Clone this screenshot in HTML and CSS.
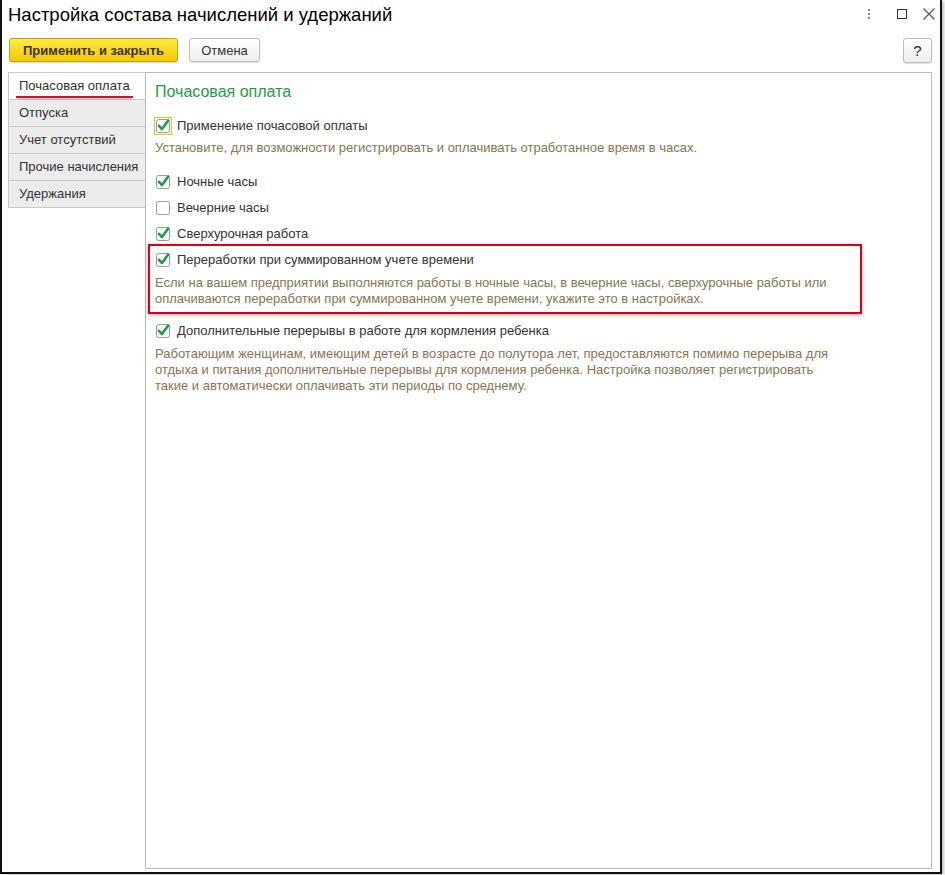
FILE: index.html
```html
<!DOCTYPE html>
<html lang="ru">
<head>
<meta charset="utf-8">
<title>Настройка состава начислений и удержаний</title>
<link rel="stylesheet" href="styles.css">
</head>
<body>
<div class="window">
  <div class="titlebar">
    <div class="title">Настройка состава начислений и удержаний</div>
    <div class="win-controls">
      <span class="ctl-more"><i></i><i></i><i></i></span>
      <span class="ctl-max"></span>
      <svg class="ctl-close" width="14" height="14" viewBox="0 0 14 14"><path d="M1.5 1.5 L12.5 12.5 M12.5 1.5 L1.5 12.5" stroke="#555" stroke-width="1.2" fill="none"/></svg>
    </div>
  </div>
  <div class="toolbar">
    <button class="btn btn-primary">Применить и закрыть</button>
    <button class="btn btn-cancel">Отмена</button>
    <span class="spacer"></span>
    <button class="btn btn-help">?</button>
  </div>
  <div class="main">
    <div class="tabs">
      <div class="tab tab-active"><span class="tab-label">Почасовая оплата</span></div>
      <div class="tab">Отпуска</div>
      <div class="tab">Учет отсутствий</div>
      <div class="tab">Прочие начисления</div>
      <div class="tab">Удержания</div>
    </div>
    <div class="panel">
      <div class="panel-title">Почасовая оплата</div>

      <div class="row row-first">
        <span class="cb cb-focus"><svg width="18" height="18" viewBox="0 0 18 18"><rect x="2.5" y="2.5" width="13" height="13" rx="2" fill="#fff" stroke="#9b9b9b"/><path d="M5 8.8 L8 12 L14.2 3.6" stroke="#1f9a45" stroke-width="2.6" fill="none" stroke-linecap="round" stroke-linejoin="round"/></svg></span>
        <span class="label">Применение почасовой оплаты</span>
      </div>
      <div class="desc">Установите, для возможности регистрировать и оплачивать отработанное время в часах.</div>

      <div class="row row-gap">
        <span class="cb"><svg width="18" height="18" viewBox="0 0 18 18"><rect x="2.5" y="2.5" width="13" height="13" rx="2" fill="#fff" stroke="#9b9b9b"/><path d="M5 8.8 L8 12 L14.2 3.6" stroke="#1f9a45" stroke-width="2.6" fill="none" stroke-linecap="round" stroke-linejoin="round"/></svg></span>
        <span class="label">Ночные часы</span>
      </div>
      <div class="row row-next">
        <span class="cb"><svg width="18" height="18" viewBox="0 0 18 18"><rect x="2.5" y="2.5" width="13" height="13" rx="2" fill="#fff" stroke="#9b9b9b"/></svg></span>
        <span class="label">Вечерние часы</span>
      </div>
      <div class="row row-next2">
        <span class="cb"><svg width="18" height="18" viewBox="0 0 18 18"><rect x="2.5" y="2.5" width="13" height="13" rx="2" fill="#fff" stroke="#9b9b9b"/><path d="M5 8.8 L8 12 L14.2 3.6" stroke="#1f9a45" stroke-width="2.6" fill="none" stroke-linecap="round" stroke-linejoin="round"/></svg></span>
        <span class="label">Сверхурочная работа</span>
      </div>

      <div class="highlight">
        <div class="row">
          <span class="cb"><svg width="18" height="18" viewBox="0 0 18 18"><rect x="2.5" y="2.5" width="13" height="13" rx="2" fill="#fff" stroke="#9b9b9b"/><path d="M5 8.8 L8 12 L14.2 3.6" stroke="#1f9a45" stroke-width="2.6" fill="none" stroke-linecap="round" stroke-linejoin="round"/></svg></span>
          <span class="label">Переработки при суммированном учете времени</span>
        </div>
        <div class="desc desc-block">Если на вашем предприятии выполняются работы в ночные часы, в вечерние часы, сверхурочные работы или<br>оплачиваются переработки при суммированном учете времени, укажите это в настройках.</div>
      </div>

      <div class="row row-after">
        <span class="cb"><svg width="18" height="18" viewBox="0 0 18 18"><rect x="2.5" y="2.5" width="13" height="13" rx="2" fill="#fff" stroke="#9b9b9b"/><path d="M5 8.8 L8 12 L14.2 3.6" stroke="#1f9a45" stroke-width="2.6" fill="none" stroke-linecap="round" stroke-linejoin="round"/></svg></span>
        <span class="label">Дополнительные перерывы в работе для кормления ребенка</span>
      </div>
      <div class="desc desc-block">Работающим женщинам, имеющим детей в возрасте до полутора лет, предоставляются помимо перерыва для<br>отдыха и питания дополнительные перерывы для кормления ребенка. Настройка позволяет регистрировать<br>такие и автоматически оплачивать эти периоды по среднему.</div>
    </div>
  </div>
</div>
</body>
</html>
```
FILE: styles.css
```css
* { box-sizing: border-box; }
html, body { margin: 0; padding: 0; background: #fff; }
body {
  width: 945px;
  height: 875px;
  overflow: hidden;
  font-family: "Liberation Sans", Arial, sans-serif;
}
.window {
  width: 942px;
  height: 874px;
  border-left: 2px solid #111;
  border-right: 2px solid #111;
  border-bottom: 2px solid #111;
  background: #fff;
  box-shadow: 2px 1px 3px rgba(0,0,0,0.25);
  display: flex;
  flex-direction: column;
}
.titlebar {
  height: 30px;
  display: flex;
  align-items: center;
  padding-left: 6px;
}
.title {
  font-size: 18.5px;
  line-height: 30px;
  color: #000;
  flex: 1;
  margin-top: -1px;
}
.win-controls {
  display: flex;
  align-items: center;
  height: 30px;
  margin-top: -2px;
}
.ctl-more {
  display: flex;
  flex-direction: column;
  gap: 2px;
  width: 3px;
  margin-right: 26px;
}
.ctl-more i {
  display: block;
  width: 2px;
  height: 2px;
  background: #8a8a8a;
}
.ctl-max {
  display: block;
  width: 10px;
  height: 10px;
  border: 1px solid #333;
  margin-right: 15px;
}
.ctl-close { display: block; margin-right: 4px; }

.toolbar {
  display: flex;
  align-items: flex-start;
  margin-top: 8px;
  padding-left: 7px;
  padding-right: 8px;
  height: 25px;
}
.btn {
  font-family: "Liberation Sans", Arial, sans-serif;
  font-size: 13px;
  height: 24px;
  border-radius: 3px;
  padding: 0;
  margin: 0;
  cursor: default;
}
.btn-primary {
  width: 169px;
  font-weight: bold;
  color: #3e3500;
  background: linear-gradient(#ffea45, #f2c900);
  border: 1px solid #c7a500;
  box-shadow: 0 1px 1px rgba(0,0,0,0.15);
}
.btn-cancel {
  width: 71px;
  margin-left: 11px;
  color: #333;
  background: linear-gradient(#ffffff, #eeeeee);
  border: 1px solid #bdbdbd;
  box-shadow: 0 1px 1px rgba(0,0,0,0.12);
}
.spacer { flex: 1; }
.btn-help {
  width: 29px;
  height: 25px;
  font-size: 15px;
  color: #222;
  background: linear-gradient(#ffffff, #eeeeee);
  border: 1px solid #bdbdbd;
  box-shadow: 0 1px 1px rgba(0,0,0,0.12);
}

.main {
  display: flex;
  flex: 1;
  margin-top: 9px;
  padding-left: 6px;
  padding-right: 8px;
  padding-bottom: 3px;
}
.tabs {
  width: 137px;
  display: flex;
  flex-direction: column;
}
.tab {
  height: 27px;
  padding-left: 10px;
  font-size: 13px;
  line-height: 26px;
  color: #333;
  background: #ececec;
  border-left: 1px solid #c9c9c9;
  border-bottom: 1px solid #c9c9c9;
}
.tab-active {
  height: 28px;
  background: #fff;
  border-top: 1px solid #c9c9c9;
  line-height: 26px;
  padding-left: 7px;
}
.tab-label {
  display: inline-block;
  padding: 0 3px;
  line-height: 20px;
  border-bottom: 2px solid #cc1030;
  box-shadow: 0 2px 2px -1px rgba(0,0,0,0.25);
}
.panel {
  flex: 1;
  border: 1px solid #bcbcbc;
  padding-left: 9px;
  padding-top: 9px;
}
.panel-title {
  font-size: 16px;
  line-height: 20px;
  color: #1e9c48;
}
.row {
  display: flex;
  align-items: center;
  height: 18px;
}
.row-first { margin-top: 15px; }
.row-gap { margin-top: 17px; }
.row-next { margin-top: 8px; }
.row-next2 { margin-top: 8px; }
.row-after { margin-top: 8px; }
.cb {
  display: block;
  width: 18px;
  height: 18px;
  margin-left: -1px;
  margin-right: 5px;
}
.cb svg { display: block; }
.cb-focus { outline: 1px solid #f0c419; outline-offset: -1px; }
.label {
  font-size: 13px;
  color: #333;
  line-height: 18px;
}
.desc {
  font-size: 13px;
  line-height: 16px;
  color: #877556;
  margin-top: 5px;
  white-space: nowrap;
}
.desc-block { margin-top: 6px; }
.highlight {
  margin-top: 1px;
  margin-left: -7px;
  width: 714px;
  border: 2px solid #d0021b;
  padding: 5px 5px 5px 5px;
  box-shadow: 0 1px 4px rgba(0,0,0,0.35);
}
```
